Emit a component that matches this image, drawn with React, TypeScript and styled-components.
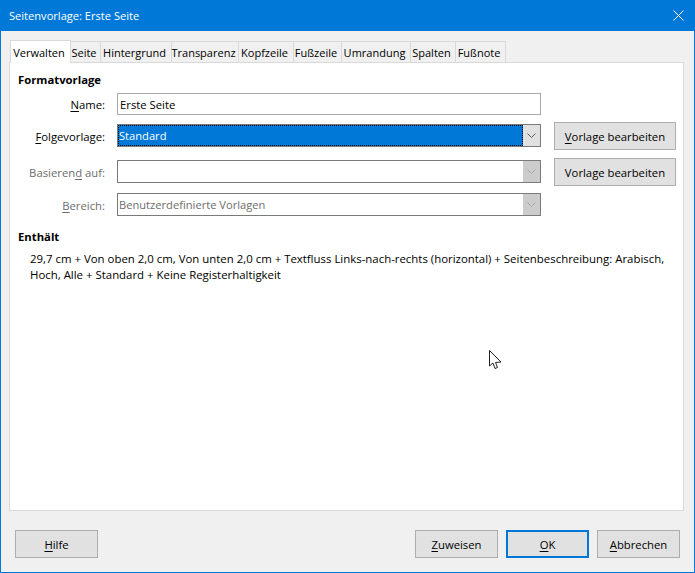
import React from 'react';
import styled, { createGlobalStyle } from 'styled-components';

const GlobalStyle = createGlobalStyle`
  html, body {
    margin: 0;
    padding: 0;
    background: #f0f0f0;
  }
  body {
    font-family: "Open Sans", "Noto Sans", "Liberation Sans", sans-serif;
    font-size: 11.3px;
    color: #000;
  }
`;

const Window = styled.div`
  position: relative;
  box-sizing: border-box;
  width: 695px;
  height: 573px;
  display: flex;
  flex-direction: column;
  border: 1px solid #0078d7;
  border-top: 0;
  background: #f0f0f0;
  overflow: hidden;
`;

const TitleBar = styled.div`
  flex: none;
  height: 31px;
  margin: 0 -1px;
  padding: 0 11px 0 9px;
  display: flex;
  align-items: center;
  justify-content: space-between;
  background: #0078d7;
  color: #fff;
  font-size: 11.1px;
`;

const CloseIcon = styled.svg`
  margin-bottom: 1px;
`;

const Body = styled.div`
  flex: 1;
  min-height: 0;
  display: flex;
  flex-direction: column;
  padding: 8px 10px 14px 8px;
`;

const TabStrip = styled.div`
  flex: none;
  height: 23px;
  display: flex;
  align-items: flex-end;
  padding-left: 1px;
`;

const Tab = styled.div<{ $active?: boolean; $width: number }>`
  box-sizing: border-box;
  width: ${(p) => p.$width}px;
  height: ${(p) => (p.$active ? 23 : 21)}px;
  padding-right: 3px;
  display: flex;
  align-items: center;
  justify-content: center;
  font-size: 11px;
  background: ${(p) => (p.$active ? '#fff' : '#f0f0f0')};
  border: 1px solid #d9d9d9;
  border-left-width: ${(p) => (p.$active ? 1 : 0)}px;
  border-bottom: 0;
  white-space: nowrap;
  position: relative;
  margin-bottom: ${(p) => (p.$active ? -1 : 0)}px;
  z-index: ${(p) => (p.$active ? 1 : 0)};
`;

const Panel = styled.div`
  flex: 1;
  min-height: 0;
  background: #fff;
  border: 1px solid #d9d9d9;
  padding: 9px 7px 0 8px;
`;

const SectionTitle = styled.div`
  font-weight: 700;
  line-height: 16px;
  height: 16px;
`;

const FormGrid = styled.div`
  margin-top: 5px;
  display: flex;
  flex-direction: column;
`;

const Row = styled.div<{ $height: number; $gap?: number }>`
  height: ${(p) => p.$height}px;
  margin-top: ${(p) => p.$gap ?? 0}px;
  display: flex;
  align-items: center;
`;

const Label = styled.div<{ $disabled?: boolean }>`
  flex: none;
  width: 87px;
  text-align: right;
  margin-right: 12px;
  color: ${(p) => (p.$disabled ? '#6d6d6d' : '#000')};
  white-space: nowrap;
`;

const TextInput = styled.div`
  box-sizing: border-box;
  width: 424px;
  height: 22px;
  border: 1px solid #a9a9a9;
  display: flex;
  align-items: center;
  padding-left: 2px;
  background: #fff;
`;

const Combo = styled.div<{ $disabled?: boolean }>`
  box-sizing: border-box;
  flex: none;
  width: 424px;
  height: 23px;
  margin-bottom: 1px;
  border: 1px solid #7a7a7a;
  display: flex;
  font-size: 11.15px;
  background: #fff;
  color: ${(p) => (p.$disabled ? '#6d6d6d' : '#000')};
`;

const ComboValue = styled.div<{ $selected?: boolean }>`
  flex: 1;
  min-width: 0;
  display: flex;
  align-items: center;
  padding-left: 1px;
  background: ${(p) => (p.$selected ? '#0078d7' : 'transparent')};
  color: ${(p) => (p.$selected ? '#fff' : 'inherit')};
  outline: ${(p) => (p.$selected ? '1px dotted #000' : 'none')};
  outline-offset: -1px;
`;

const ComboArrow = styled.div<{ $disabled?: boolean }>`
  flex: none;
  width: 17px;
  display: flex;
  align-items: center;
  justify-content: center;
  background: ${(p) => (p.$disabled ? '#cccccc' : '#e1e1e1')};
  color: ${(p) => (p.$disabled ? '#a6a6a6' : '#606060')};
`;

const Button = styled.div<{ $width: number; $default?: boolean }>`
  box-sizing: border-box;
  flex: none;
  width: ${(p) => p.$width}px;
  height: 28px;
  display: flex;
  align-items: center;
  justify-content: center;
  background: #e1e1e1;
  border: ${(p) => (p.$default ? '2px solid #0078d7' : '1px solid #adadad')};
  white-space: nowrap;
`;

const SideButton = styled(Button)`
  margin-left: 13px;
`;

const ContentsTitle = styled(SectionTitle)`
  margin-top: 12px;
`;

const Description = styled.div`
  margin: 6px 0 0 12px;
  width: 648px;
  font-size: 11.42px;
  line-height: 16px;
`;

const Footer = styled.div`
  flex: none;
  margin-top: 19px;
  padding: 0 4px 0 6px;
  display: flex;
  justify-content: space-between;
`;

const FooterRight = styled.div`
  display: flex;
  gap: 8px;
`;

const Key = styled.span`
  text-decoration: underline;
  text-underline-offset: 2px;
`;

const Cursor = styled.svg`
  position: absolute;
  left: 487px;
  top: 349px;
`;

const tabs = [
  { label: 'Verwalten', width: 61, active: true },
  { label: 'Seite', width: 30 },
  { label: 'Hintergrund', width: 71 },
  { label: 'Transparenz', width: 67 },
  { label: 'Kopfzeile', width: 55 },
  { label: 'Fußzeile', width: 48 },
  { label: 'Umrandung', width: 69 },
  { label: 'Spalten', width: 45 },
  { label: 'Fußnote', width: 50 },
];

const Chevron = () => (
  <svg width="9" height="5" viewBox="0 0 9 5" fill="none" stroke="currentColor" strokeWidth="1">
    <path d="M0.5 0.5 L4.5 4.5 L8.5 0.5" />
  </svg>
);

const App: React.FC = () => (
  <>
    <GlobalStyle />
    <Window>
      <TitleBar>
        <span>Seitenvorlage: Erste Seite</span>
        <CloseIcon width="11" height="11" viewBox="0 0 11 11" stroke="#fff" strokeWidth="1" fill="none">
          <path d="M0.5 0.5 L10.5 10.5 M10.5 0.5 L0.5 10.5" />
        </CloseIcon>
      </TitleBar>
      <Body>
        <TabStrip>
          {tabs.map((t) => (
            <Tab key={t.label} $active={t.active} $width={t.width}>
              {t.label}
            </Tab>
          ))}
        </TabStrip>
        <Panel>
          <SectionTitle>Formatvorlage</SectionTitle>
          <FormGrid>
            <Row $height={22} $gap={0}>
              <Label>
                <Key>N</Key>ame:
              </Label>
              <TextInput>Erste Seite</TextInput>
            </Row>
            <Row $height={28} $gap={7}>
              <Label>
                <Key>F</Key>olgevorlage:
              </Label>
              <Combo>
                <ComboValue $selected>Standard</ComboValue>
                <ComboArrow>
                  <Chevron />
                </ComboArrow>
              </Combo>
              <SideButton $width={122}>
                <span>
                  <Key>V</Key>orlage bearbeiten
                </span>
              </SideButton>
            </Row>
            <Row $height={28} $gap={8}>
              <Label $disabled>
                Basieren<Key>d</Key> auf:
              </Label>
              <Combo $disabled>
                <ComboValue />
                <ComboArrow $disabled>
                  <Chevron />
                </ComboArrow>
              </Combo>
              <SideButton $width={122}>
                <span>
                  Vorla<Key>g</Key>e bearbeiten
                </span>
              </SideButton>
            </Row>
            <Row $height={24} $gap={7}>
              <Label $disabled>
                <Key>B</Key>ereich:
              </Label>
              <Combo $disabled>
                <ComboValue>Benutzerdefinierte Vorlagen</ComboValue>
                <ComboArrow $disabled>
                  <Chevron />
                </ComboArrow>
              </Combo>
            </Row>
          </FormGrid>
          <ContentsTitle>Enthält</ContentsTitle>
          <Description>
            29,7 cm + Von oben 2,0 cm, Von unten 2,0 cm + Textfluss Links-nach-rechts (horizontal) + Seitenbeschreibung: Arabisch,
            Hoch, Alle + Standard + Keine Registerhaltigkeit
          </Description>
        </Panel>
        <Footer>
          <Button $width={83}>
            <span>
              <Key>H</Key>ilfe
            </span>
          </Button>
          <FooterRight>
            <Button $width={83}>
              <span>
                <Key>Z</Key>uweisen
              </span>
            </Button>
            <Button $width={83} $default>
              <span>
                <Key>O</Key>K
              </span>
            </Button>
            <Button $width={83}>
              <span>
                <Key>A</Key>bbrechen
              </span>
            </Button>
          </FooterRight>
        </Footer>
      </Body>
      <Cursor width="15" height="21" viewBox="0 0 15 21">
        <path
          d="M1.5 1.5 L1.5 17 L5 14 L7 19.5 L9.5 18.5 L7.5 13.5 L13 13 Z"
          fill="#fff"
          stroke="#222"
          strokeWidth="1"
          strokeLinejoin="round"
        />
      </Cursor>
    </Window>
  </>
);

export default App;
